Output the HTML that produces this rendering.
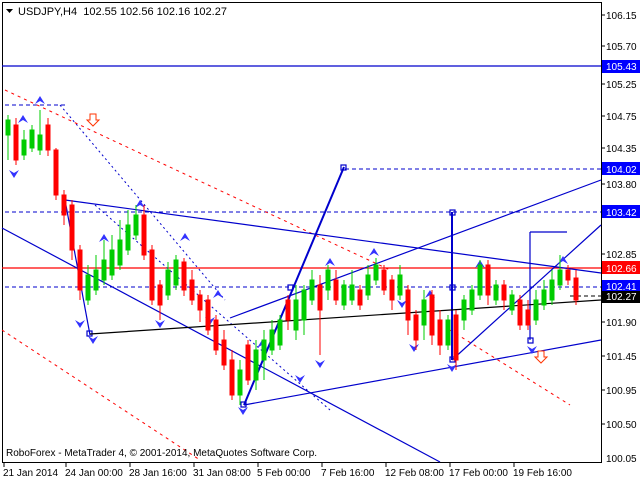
<!DOCTYPE html>
<html><head><meta charset="utf-8"><style>
html,body{margin:0;padding:0;background:#fff;}
svg{display:block;font-family:"Liberation Sans",sans-serif;}
.r{fill:#f00;stroke:#f00}.g{fill:#0c0;stroke:#0c0}
.ax{font-size:10px;fill:#000}
.bx{font-size:10px;fill:#fff}
</style></head><body>
<svg width="640" height="480" viewBox="0 0 640 480">
<rect x="0" y="0" width="640" height="480" fill="#fff"/>
<rect x="2.5" y="2.5" width="599" height="460" fill="none" stroke="#000"/>
<!-- lines -->
<line x1="2" y1="66" x2="601" y2="66" stroke="#00c" stroke-width="1.3"/>
<line x1="2" y1="268" x2="601" y2="268" stroke="#f00" stroke-width="1.3"/>
<g stroke="#00c" fill="none" stroke-dasharray="4,3">
<line x1="345" y1="169" x2="601" y2="169"/>
<line x1="5" y1="212" x2="601" y2="212"/>
<line x1="5" y1="287" x2="601" y2="287"/>
<line x1="5" y1="105" x2="65" y2="105"/>
<line x1="60" y1="105" x2="225" y2="300" stroke-dasharray="2,3"/>
<line x1="95" y1="205" x2="330" y2="410" stroke-dasharray="2,3"/>
<line x1="570" y1="296" x2="601" y2="296" stroke="#000"/>
</g>
<g stroke="#f00" fill="none" stroke-dasharray="3,4">
<line x1="5" y1="90" x2="390" y2="270"/>
<line x1="2" y1="330" x2="200" y2="460"/>
<line x1="450" y1="330" x2="570" y2="405"/>
</g>
<g stroke="#00c" fill="none" stroke-width="1.2">
<line x1="65" y1="200" x2="601" y2="273"/>
<line x1="2" y1="228" x2="440" y2="462"/>
<line x1="65" y1="200" x2="90" y2="335"/>
<line x1="230" y1="318" x2="601" y2="180"/>
<line x1="244" y1="405" x2="601" y2="340"/>
<line x1="244" y1="405" x2="344" y2="167" stroke-width="2"/>
<line x1="452" y1="212" x2="452" y2="360" stroke-width="2"/>
<line x1="530" y1="232" x2="530" y2="340"/>
<line x1="530" y1="232" x2="567" y2="232"/>
<line x1="452" y1="360" x2="601" y2="225"/>
<rect x="341" y="165" width="5" height="5"/>
<rect x="450" y="210" width="5" height="5"/>
<rect x="450" y="285" width="5" height="5"/>
<rect x="450" y="357" width="5" height="5"/>
<rect x="241" y="402" width="5" height="5"/>
<rect x="288" y="285" width="5" height="5"/>
<rect x="87" y="331" width="5" height="5"/>
<rect x="528" y="338" width="5" height="5"/>
</g>
<line x1="90" y1="334" x2="601" y2="300" stroke="#000" stroke-width="1.2"/>
<!-- fractal markers -->
<g fill="#33f">
<path d="M40 96l-5 8 5-3 5 3z"/><path d="M104 234l-5 8 5-3 5 3z"/><path d="M140 200l-5 8 5-3 5 3z"/>
<path d="M185 233l-5 8 5-3 5 3z"/><path d="M330 258l-5 8 5-3 5 3z"/><path d="M374 248l-5 8 5-3 5 3z"/>
<path d="M430 290l-5 8 5-3 5 3z"/><path d="M480 260l-5 8 5-3 5 3z"/><path d="M563 256l-5 8 5-3 5 3z"/>
<path d="M23 115l-5 8 5-3 5 3z"/><path d="M218 290l-5 8 5-3 5 3z"/><path d="M262 340l-5 8 5-3 5 3z"/>
<path d="M14 178l-5-8 5 3 5-3z"/><path d="M80 328l-5-8 5 3 5-3z"/><path d="M93 344l-5-8 5 3 5-3z"/>
<path d="M160 328l-5-8 5 3 5-3z"/><path d="M210 325l-5-8 5 3 5-3z"/><path d="M243 415l-5-8 5 3 5-3z"/>
<path d="M300 383l-5-8 5 3 5-3z"/><path d="M320 368l-5-8 5 3 5-3z"/><path d="M414 352l-5-8 5 3 5-3z"/>
<path d="M452 372l-5-8 5 3 5-3z"/><path d="M532 354l-5-8 5 3 5-3z"/><path d="M402 308l-5-8 5 3 5-3z"/>
</g>
<g fill="#fff" stroke="#f30">
<path d="M90 114h6v6h3l-6 6-6-6h3z"/><path d="M538 351h6v6h3l-6 6-6-6h3z"/>
</g>
<!-- candles -->
<g stroke-width="1">
<line class="g" x1="8" y1="115" x2="8" y2="160"/><rect class="g" x="6" y="120" width="4" height="15"/>
<line class="r" x1="16" y1="118" x2="16" y2="165"/><rect class="r" x="14" y="125" width="4" height="35"/>
<line class="g" x1="24" y1="130" x2="24" y2="160"/><rect class="g" x="22" y="140" width="4" height="15"/>
<line class="g" x1="32" y1="125" x2="32" y2="152"/><rect class="g" x="30" y="130" width="4" height="18"/>
<line class="g" x1="40" y1="110" x2="40" y2="155"/><rect class="g" x="38" y="135" width="4" height="15"/>
<line class="r" x1="48" y1="118" x2="48" y2="156"/><rect class="r" x="46" y="125" width="4" height="25"/>
<line class="r" x1="56" y1="148" x2="56" y2="200"/><rect class="r" x="54" y="150" width="4" height="45"/>
<line class="r" x1="64" y1="190" x2="64" y2="225"/><rect class="r" x="62" y="195" width="4" height="20"/>
<line class="r" x1="72" y1="200" x2="72" y2="260"/><rect class="r" x="70" y="205" width="4" height="45"/>
<line class="r" x1="80" y1="245" x2="80" y2="300"/><rect class="r" x="78" y="250" width="4" height="40"/>
<line class="g" x1="88" y1="265" x2="88" y2="305"/><rect class="g" x="86" y="275" width="4" height="25"/>
<line class="g" x1="96" y1="255" x2="96" y2="295"/><rect class="g" x="94" y="270" width="4" height="20"/>
<line class="g" x1="104" y1="240" x2="104" y2="285"/><rect class="g" x="102" y="260" width="4" height="20"/>
<line class="g" x1="112" y1="235" x2="112" y2="280"/><rect class="g" x="110" y="250" width="4" height="25"/>
<line class="g" x1="120" y1="220" x2="120" y2="270"/><rect class="g" x="118" y="240" width="4" height="25"/>
<line class="g" x1="128" y1="210" x2="128" y2="255"/><rect class="g" x="126" y="225" width="4" height="25"/>
<line class="g" x1="136" y1="205" x2="136" y2="240"/><rect class="g" x="134" y="215" width="4" height="20"/>
<line class="r" x1="144" y1="205" x2="144" y2="260"/><rect class="r" x="142" y="215" width="4" height="40"/>
<line class="r" x1="152" y1="245" x2="152" y2="305"/><rect class="r" x="150" y="250" width="4" height="50"/>
<line class="r" x1="160" y1="280" x2="160" y2="320"/><rect class="r" x="158" y="285" width="4" height="20"/>
<line class="g" x1="168" y1="262" x2="168" y2="300"/><rect class="g" x="166" y="270" width="4" height="25"/>
<line class="g" x1="176" y1="255" x2="176" y2="290"/><rect class="g" x="174" y="260" width="4" height="25"/>
<line class="r" x1="184" y1="258" x2="184" y2="296"/><rect class="r" x="182" y="262" width="4" height="28"/>
<line class="r" x1="192" y1="270" x2="192" y2="305"/><rect class="r" x="190" y="280" width="4" height="20"/>
<line class="r" x1="200" y1="290" x2="200" y2="322"/><rect class="r" x="198" y="295" width="4" height="15"/>
<line class="r" x1="208" y1="295" x2="208" y2="335"/><rect class="r" x="206" y="300" width="4" height="30"/>
<line class="r" x1="216" y1="315" x2="216" y2="355"/><rect class="r" x="214" y="320" width="4" height="30"/>
<line class="r" x1="224" y1="330" x2="224" y2="370"/><rect class="r" x="222" y="340" width="4" height="25"/>
<line class="r" x1="232" y1="350" x2="232" y2="400"/><rect class="r" x="230" y="360" width="4" height="35"/>
<line class="g" x1="240" y1="360" x2="240" y2="405"/><rect class="g" x="238" y="370" width="4" height="25"/>
<line class="r" x1="248" y1="340" x2="248" y2="385"/><rect class="r" x="246" y="345" width="4" height="35"/>
<line class="g" x1="256" y1="340" x2="256" y2="390"/><rect class="g" x="254" y="350" width="4" height="30"/>
<line class="g" x1="264" y1="330" x2="264" y2="380"/><rect class="g" x="262" y="340" width="4" height="20"/>
<line class="g" x1="272" y1="320" x2="272" y2="355"/><rect class="g" x="270" y="330" width="4" height="20"/>
<line class="g" x1="280" y1="315" x2="280" y2="350"/><rect class="g" x="278" y="320" width="4" height="25"/>
<line class="r" x1="288" y1="295" x2="288" y2="330"/><rect class="r" x="286" y="300" width="4" height="20"/>
<line class="g" x1="296" y1="285" x2="296" y2="340"/><rect class="g" x="294" y="300" width="4" height="30"/>
<line class="g" x1="304" y1="285" x2="304" y2="335"/><rect class="g" x="302" y="290" width="4" height="30"/>
<line class="g" x1="312" y1="270" x2="312" y2="305"/><rect class="g" x="310" y="280" width="4" height="20"/>
<line class="r" x1="320" y1="275" x2="320" y2="355"/><rect class="r" x="318" y="285" width="4" height="25"/>
<line class="g" x1="328" y1="265" x2="328" y2="300"/><rect class="g" x="326" y="270" width="4" height="20"/>
<line class="r" x1="336" y1="270" x2="336" y2="305"/><rect class="r" x="334" y="280" width="4" height="20"/>
<line class="g" x1="344" y1="280" x2="344" y2="310"/><rect class="g" x="342" y="285" width="4" height="20"/>
<line class="g" x1="352" y1="270" x2="352" y2="305"/><rect class="g" x="350" y="285" width="4" height="15"/>
<line class="r" x1="360" y1="285" x2="360" y2="310"/><rect class="r" x="358" y="290" width="4" height="15"/>
<line class="g" x1="368" y1="265" x2="368" y2="300"/><rect class="g" x="366" y="275" width="4" height="20"/>
<line class="g" x1="376" y1="258" x2="376" y2="285"/><rect class="g" x="374" y="265" width="4" height="15"/>
<line class="r" x1="384" y1="265" x2="384" y2="295"/><rect class="r" x="382" y="270" width="4" height="20"/>
<line class="r" x1="392" y1="275" x2="392" y2="310"/><rect class="r" x="390" y="280" width="4" height="20"/>
<line class="g" x1="400" y1="265" x2="400" y2="300"/><rect class="g" x="398" y="275" width="4" height="20"/>
<line class="r" x1="408" y1="285" x2="408" y2="335"/><rect class="r" x="406" y="290" width="4" height="30"/>
<line class="r" x1="416" y1="310" x2="416" y2="350"/><rect class="r" x="414" y="315" width="4" height="25"/>
<line class="g" x1="424" y1="290" x2="424" y2="340"/><rect class="g" x="422" y="300" width="4" height="25"/>
<line class="r" x1="432" y1="290" x2="432" y2="345"/><rect class="r" x="430" y="295" width="4" height="40"/>
<line class="r" x1="440" y1="310" x2="440" y2="355"/><rect class="r" x="438" y="320" width="4" height="25"/>
<line class="g" x1="448" y1="315" x2="448" y2="350"/><rect class="g" x="446" y="320" width="4" height="25"/>
<line class="r" x1="456" y1="310" x2="456" y2="370"/><rect class="r" x="454" y="315" width="4" height="45"/>
<line class="g" x1="464" y1="295" x2="464" y2="330"/><rect class="g" x="462" y="300" width="4" height="20"/>
<line class="g" x1="472" y1="285" x2="472" y2="315"/><rect class="g" x="470" y="290" width="4" height="20"/>
<line class="g" x1="480" y1="260" x2="480" y2="300"/><rect class="g" x="478" y="265" width="4" height="30"/>
<line class="r" x1="488" y1="260" x2="488" y2="305"/><rect class="r" x="486" y="265" width="4" height="30"/>
<line class="g" x1="496" y1="280" x2="496" y2="305"/><rect class="g" x="494" y="285" width="4" height="15"/>
<line class="r" x1="504" y1="280" x2="504" y2="310"/><rect class="r" x="502" y="285" width="4" height="15"/>
<line class="g" x1="512" y1="290" x2="512" y2="315"/><rect class="g" x="510" y="295" width="4" height="15"/>
<line class="r" x1="520" y1="295" x2="520" y2="330"/><rect class="r" x="518" y="300" width="4" height="25"/>
<line class="r" x1="528" y1="300" x2="528" y2="330"/><rect class="r" x="526" y="310" width="4" height="15"/>
<line class="g" x1="536" y1="290" x2="536" y2="325"/><rect class="g" x="534" y="300" width="4" height="20"/>
<line class="g" x1="544" y1="280" x2="544" y2="310"/><rect class="g" x="542" y="290" width="4" height="15"/>
<line class="g" x1="552" y1="270" x2="552" y2="305"/><rect class="g" x="550" y="280" width="4" height="20"/>
<line class="g" x1="560" y1="255" x2="560" y2="290"/><rect class="g" x="558" y="270" width="4" height="15"/>
<line class="r" x1="568" y1="265" x2="568" y2="285"/><rect class="r" x="566" y="270" width="4" height="10"/>
<line class="r" x1="576" y1="270" x2="576" y2="305"/><rect class="r" x="574" y="278" width="4" height="22"/>
</g>
<!-- title -->
<path d="M6 9h7l-3.5 4z" fill="#000"/>
<text x="18" y="15" font-size="11" fill="#000">USDJPY,H4&#160; 102.55 102.56 102.16 102.27</text>
<text x="6" y="456" font-size="10" fill="#000">RoboForex - MetaTrader 4, © 2001-2014, MetaQuotes Software Corp.</text>
<!-- axis -->
<g class="ax">
<text x="606" y="19">106.15</text><text x="606" y="50">105.70</text><text x="606" y="88">105.25</text>
<text x="606" y="120">104.75</text><text x="606" y="152">104.35</text><text x="606" y="188">103.80</text>
<text x="606" y="258">102.85</text><text x="606" y="326">101.90</text><text x="606" y="360">101.45</text>
<text x="606" y="394">100.95</text><text x="606" y="428">100.50</text><text x="606" y="462">100.05</text>
</g>
<g stroke="#000"><line x1="601" y1="15" x2="605" y2="15"/><line x1="601" y1="46" x2="605" y2="46"/><line x1="601" y1="84" x2="605" y2="84"/><line x1="601" y1="116" x2="605" y2="116"/><line x1="601" y1="148" x2="605" y2="148"/><line x1="601" y1="184" x2="605" y2="184"/><line x1="601" y1="254" x2="605" y2="254"/><line x1="601" y1="322" x2="605" y2="322"/><line x1="601" y1="356" x2="605" y2="356"/><line x1="601" y1="390" x2="605" y2="390"/><line x1="601" y1="424" x2="605" y2="424"/></g>
<rect x="602" y="60" width="38" height="13" fill="#00f"/><text class="bx" x="606" y="70">105.43</text>
<rect x="602" y="162" width="38" height="13" fill="#00f"/><text class="bx" x="606" y="173">104.02</text>
<rect x="602" y="205" width="38" height="13" fill="#00f"/><text class="bx" x="606" y="216">103.42</text>
<rect x="602" y="261" width="38" height="13" fill="#f00"/><text class="bx" x="606" y="272">102.66</text>
<rect x="602" y="280" width="38" height="12" fill="#00f"/><text class="bx" x="606" y="290">102.41</text>
<rect x="602" y="291" width="38" height="12" fill="#000"/><text class="bx" x="606" y="300">102.27</text>
<!-- time axis -->
<g stroke="#000"><line x1="4" y1="463" x2="4" y2="467"/><line x1="66" y1="463" x2="66" y2="467"/><line x1="130" y1="463" x2="130" y2="467"/><line x1="194" y1="463" x2="194" y2="467"/><line x1="258" y1="463" x2="258" y2="467"/><line x1="322" y1="463" x2="322" y2="467"/><line x1="386" y1="463" x2="386" y2="467"/><line x1="450" y1="463" x2="450" y2="467"/><line x1="514" y1="463" x2="514" y2="467"/></g>
<g class="ax">
<text x="3" y="476">21 Jan 2014</text><text x="65" y="476">24 Jan 00:00</text><text x="129" y="476">28 Jan 16:00</text>
<text x="193" y="476">31 Jan 08:00</text><text x="257" y="476">5 Feb 00:00</text><text x="321" y="476">7 Feb 16:00</text>
<text x="385" y="476">12 Feb 08:00</text><text x="449" y="476">17 Feb 00:00</text><text x="513" y="476">19 Feb 16:00</text>
</g>
</svg>
</body></html>
